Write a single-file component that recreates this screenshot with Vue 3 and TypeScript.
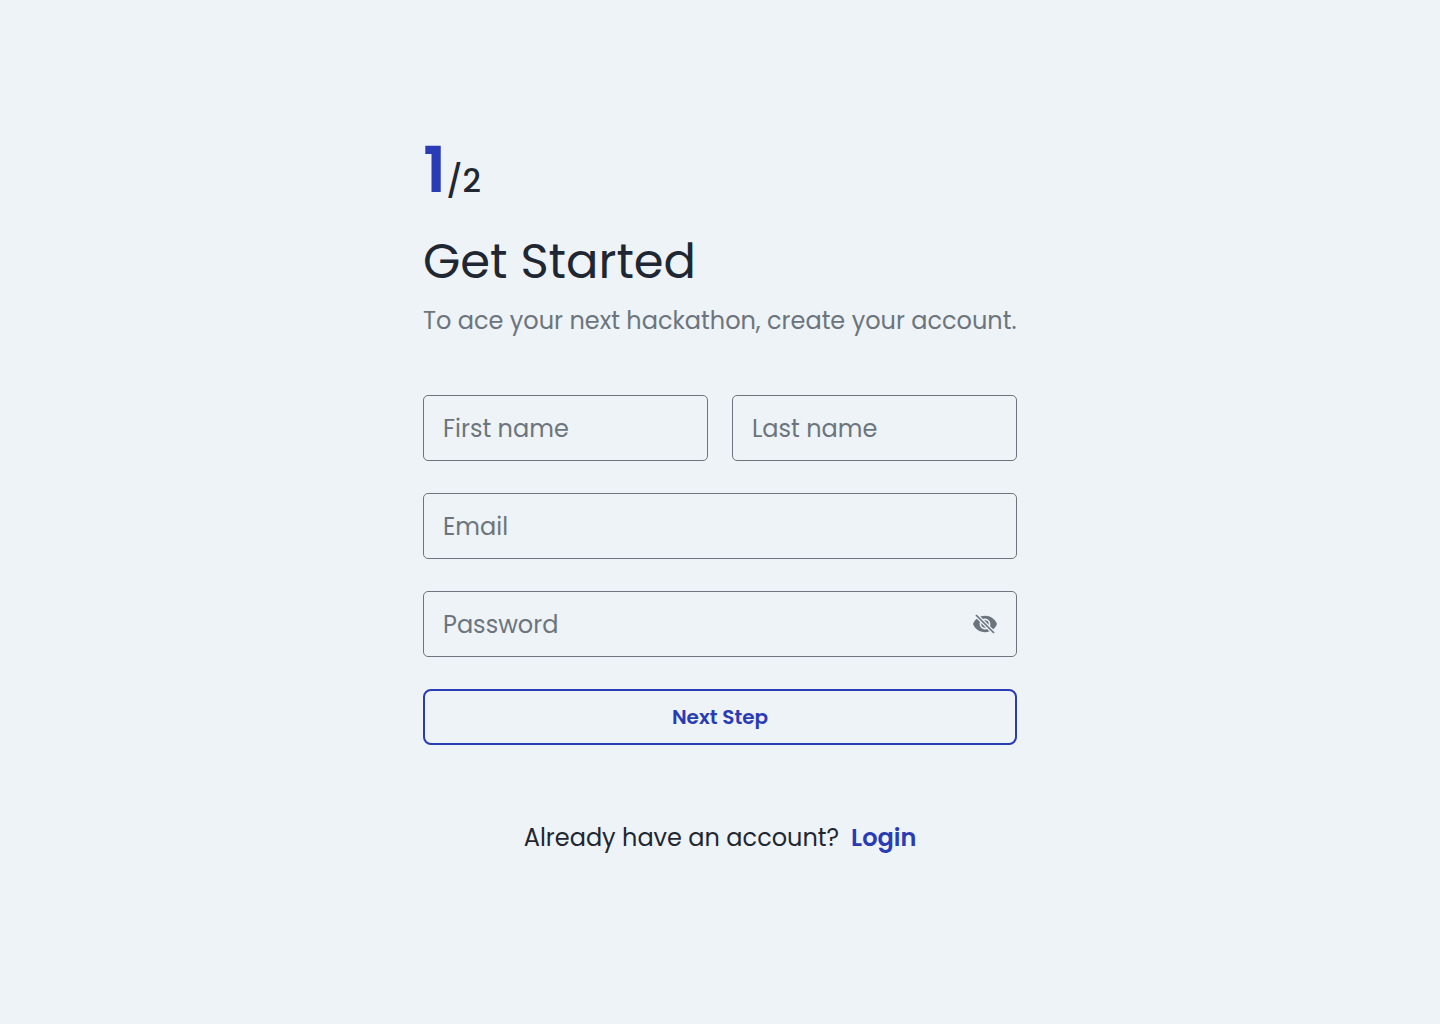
<script setup lang="ts">
import { ref } from 'vue'

const firstName = ref('')
const lastName = ref('')
const email = ref('')
const password = ref('')
const showPassword = ref(false)
</script>

<template>
  <main class="page">
    <section class="signup">
      <p class="progress"><strong>1</strong><span>/2</span></p>
      <h1>Get Started</h1>
      <p class="intro">To ace your next hackathon, create your account.</p>

      <form class="form" @submit.prevent>
        <div class="names">
          <input v-model="firstName" class="field" type="text" placeholder="First name" aria-label="First name" />
          <input v-model="lastName" class="field" type="text" placeholder="Last name" aria-label="Last name" />
        </div>
        <input v-model="email" class="field" type="email" placeholder="Email" aria-label="Email" />
        <div class="field password">
          <input
            v-model="password"
            :type="showPassword ? 'text' : 'password'"
            placeholder="Password"
            aria-label="Password"
          />
          <button
            class="toggle"
            type="button"
            aria-label="Toggle password visibility"
            @click="showPassword = !showPassword"
          >
            <svg viewBox="0 0 24 24" width="24" height="24" aria-hidden="true">
              <path class="eye" d="M0 12C2 7 6.500 3.800 12 3.800S22 7 24 12C22 17 17.500 20.200 12 20.200S2 17 0 12Z" />
              <circle class="ring" cx="12" cy="12" r="4.600" />
              <path class="gap" d="M3 3 21 21" />
              <path class="slash" d="M3 3 21 21" />
            </svg>
          </button>
        </div>
        <button class="next" type="submit">Next Step</button>
      </form>

      <p class="login">Already have an account? <a href="#login">Login</a></p>
    </section>
  </main>
</template>

<style>
body {
  margin: 0;
  background: #eef3f7;
}
</style>

<style scoped>
.page {
  box-sizing: border-box;
  min-height: 100vh;
  display: flex;
  justify-content: center;
  padding: 122px 24px 48px;
  background: #eef3f7;
  color: #1f2733;
  font-family: Poppins, Inter, sans-serif;
}

.signup {
  width: 100%;
  max-width: 594px;
}

.progress {
  display: flex;
  align-items: baseline;
  margin: 0;
  font-size: 32px;
  font-weight: 500;
  line-height: 48px;
}

.progress strong {
  color: #293bb5;
  font-size: 64px;
  font-weight: 600;
  line-height: 96px;
}

h1 {
  margin: 8px 0 5px;
  font-size: 48px;
  font-weight: 400;
  line-height: 72px;
}

.intro {
  margin: 0 0 56px;
  color: #6c757d;
  font-size: 24px;
  line-height: 36px;
}

.form {
  display: flex;
  flex-direction: column;
  gap: 32px;
}

.names {
  display: grid;
  grid-template-columns: 1fr 1fr;
  gap: 24px;
}

input {
  min-width: 0;
  font: inherit;
  color: inherit;
}

.field {
  box-sizing: border-box;
  width: 100%;
  height: 66px;
  padding: 0 19px;
  border: 1px solid #6c757d;
  border-radius: 5px;
  background: transparent;
  font-size: 24px;
}

.password {
  display: flex;
  align-items: center;
}

.password input {
  flex: 1;
  padding: 0;
  border: 0;
  background: transparent;
  outline: 0;
}

input::placeholder {
  color: #6c757d;
  opacity: 1;
}

.toggle {
  display: flex;
  padding: 0;
  border: 0;
  background: transparent;
  cursor: pointer;
}

.eye {
  fill: #6c757d;
}

.ring {
  fill: none;
  stroke: #eef3f7;
  stroke-width: 1.6;
}

.gap,
.slash {
  fill: none;
}

.gap {
  stroke: #eef3f7;
  stroke-width: 4;
}

.slash {
  stroke: #6c757d;
  stroke-width: 1.7;
}

.next {
  height: 56px;
  border: 2px solid #293bb5;
  border-radius: 8px;
  background: transparent;
  color: #293bb5;
  font: inherit;
  font-size: 20px;
  font-weight: 600;
  cursor: pointer;
}

.login {
  display: flex;
  justify-content: center;
  flex-wrap: wrap;
  gap: 0 12px;
  margin: 75px 0 0;
  font-size: 24px;
  line-height: 36px;
}

.login a {
  color: #293bb5;
  font-weight: 600;
  text-decoration: none;
}
</style>
